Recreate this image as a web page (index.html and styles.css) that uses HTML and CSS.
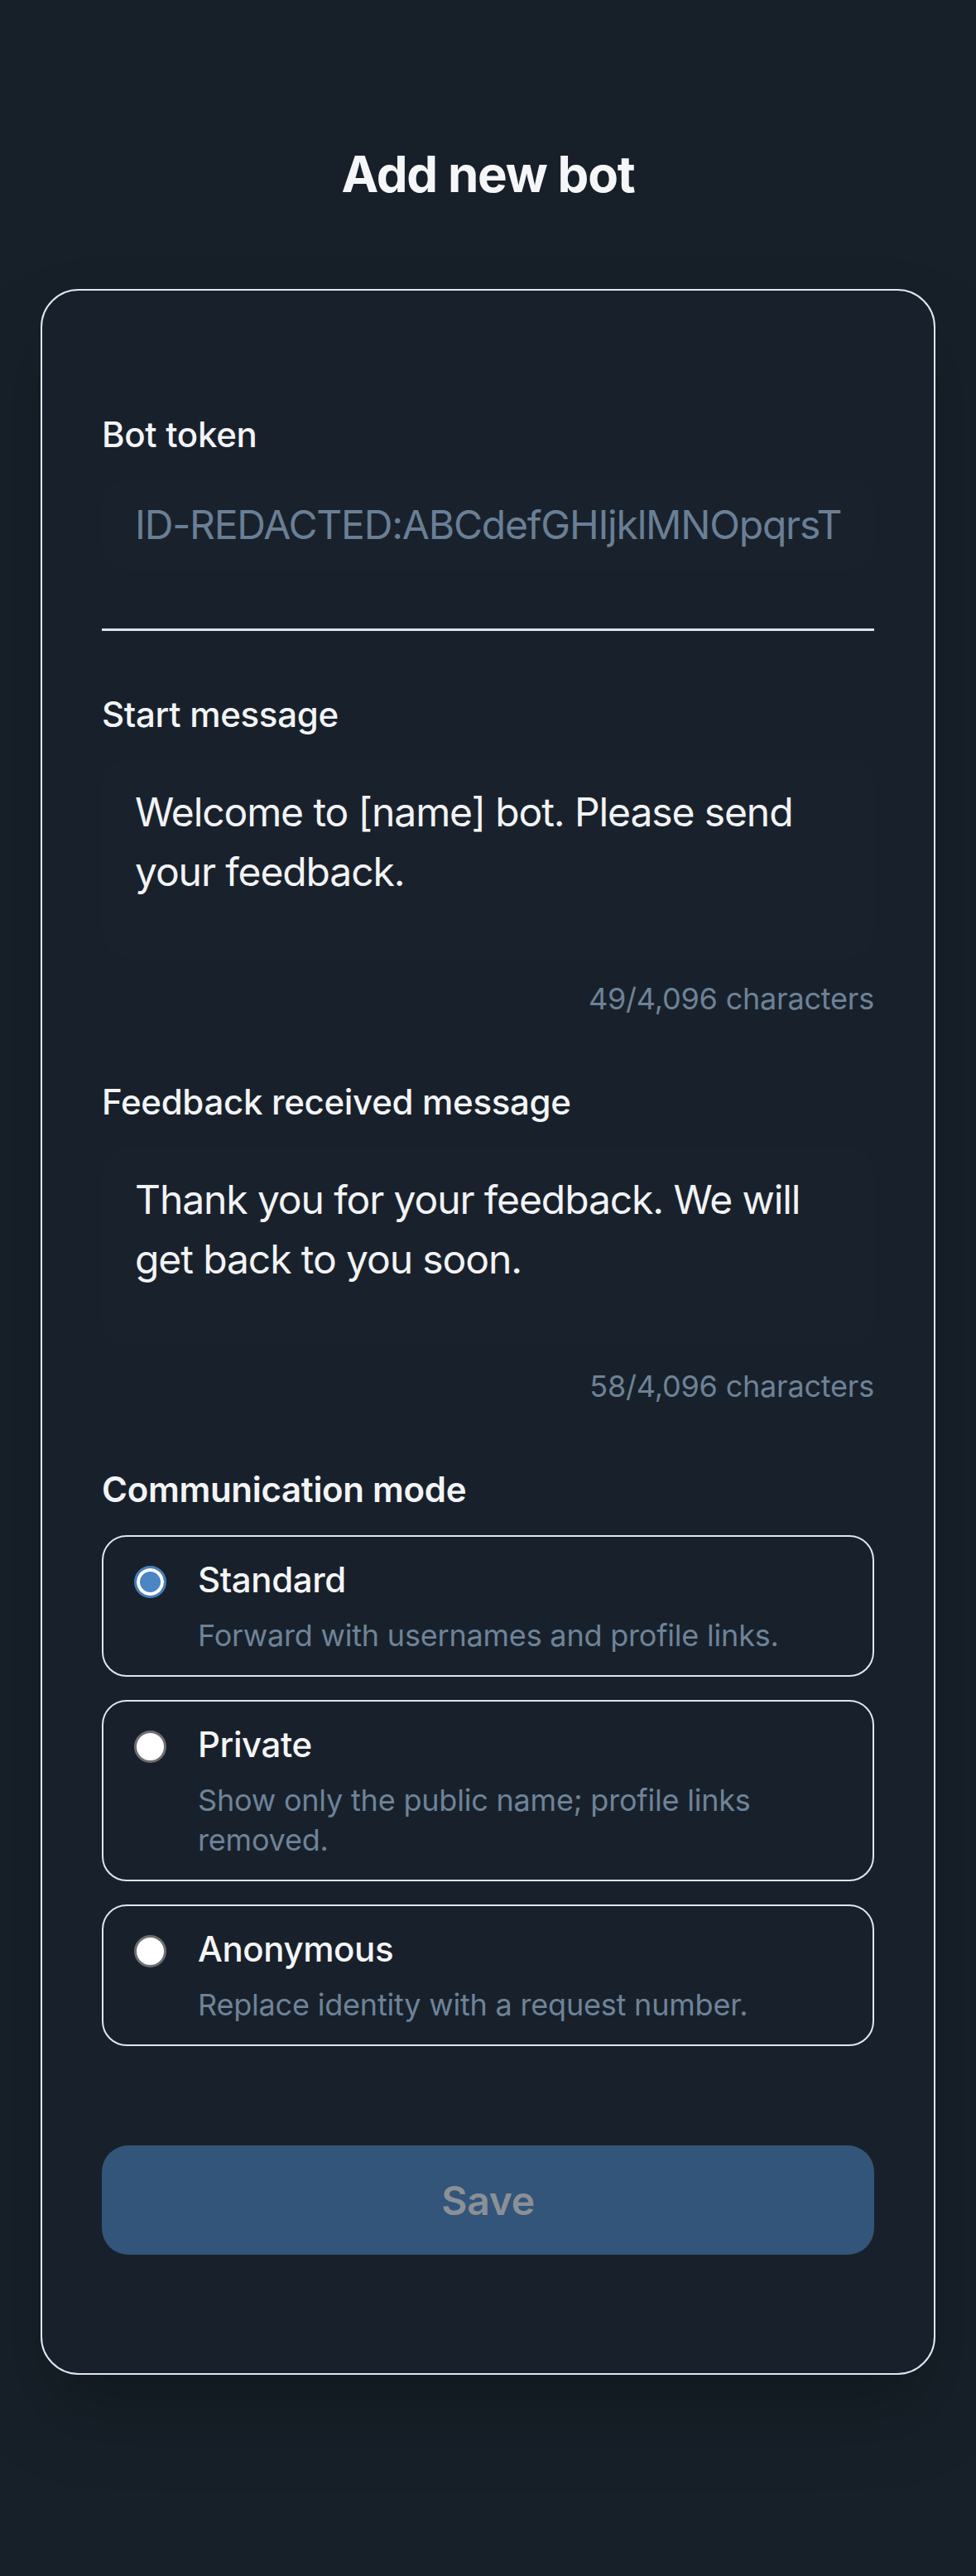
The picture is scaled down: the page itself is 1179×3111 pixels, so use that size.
FILE: index.html
```html
<!DOCTYPE html>
<html lang="en">
<head>
<meta charset="utf-8">
<title>Add new bot</title>
<link rel="stylesheet" href="styles.css">
</head>
<body>
<main class="page">
  <h1 class="title">Add new bot</h1>
  <form class="card">
    <div class="field">
      <div class="label">Bot token</div>
      <div class="input token">ID-REDACTED:ABCdefGHIjklMNOpqrsT</div>
    </div>
    <hr class="divider">
    <div class="field section">
      <div class="label">Start message</div>
      <div class="textarea">Welcome to [name] bot. Please send your feedback.</div>
      <div class="counter">49/4,096 characters</div>
    </div>
    <div class="field section">
      <div class="label">Feedback received message</div>
      <div class="textarea">Thank you for your feedback. We will get back to you soon.</div>
      <div class="counter">58/4,096 characters</div>
    </div>
    <div class="field section">
      <div class="label strong">Communication mode</div>
      <div class="modes">
        <div class="mode">
          <span class="radio checked"></span>
          <div class="mode-text">
            <div class="mode-title">Standard</div>
            <div class="mode-desc">Forward with usernames and profile links.</div>
          </div>
        </div>
        <div class="mode">
          <span class="radio"></span>
          <div class="mode-text">
            <div class="mode-title">Private</div>
            <div class="mode-desc">Show only the public name; profile links removed.</div>
          </div>
        </div>
        <div class="mode">
          <span class="radio"></span>
          <div class="mode-text">
            <div class="mode-title">Anonymous</div>
            <div class="mode-desc">Replace identity with a request number.</div>
          </div>
        </div>
      </div>
    </div>
    <button type="button" class="save">Save</button>
  </form>
</main>
</body>
</html>
```
FILE: styles.css
```css
* { box-sizing: border-box; }

html, body {
  margin: 0;
  padding: 0;
  background: #172029;
}

body {
  font-family: Inter, "Noto Sans", "Liberation Sans", sans-serif;
  color: #f2f3f5;
  min-height: 3111px;
}

.page {
  padding: 174px 49px 200px 49px;
}

.title {
  margin: 0;
  text-align: center;
  font-size: 60px;
  line-height: 72px;
  font-weight: 700;
  letter-spacing: -1.2px;
  color: #f5f6f8;
}

.card {
  margin: 103px 0 0 0;
  width: 1081px;
  background: #18212b;
  border: 2px solid #dfe6ee;
  border-radius: 46px;
  padding: 149px 72px 143px 72px;
  box-shadow: 0 50px 90px rgba(0, 0, 0, 0.22);
  display: flex;
  flex-direction: column;
}

.field {
  display: flex;
  flex-direction: column;
}

.section {
  margin-top: 76px;
}

.label {
  font-size: 42px;
  line-height: 50px;
  font-weight: 500;
  color: #f3f4f6;
  letter-spacing: -0.3px;
}

.label.strong {
  font-weight: 600;
}

.input {
  margin-top: 29px;
  height: 110px;
  line-height: 110px;
  padding: 0 40px;
  border-radius: 30px;
  background: #19222c;
  font-size: 48px;
  white-space: nowrap;
  overflow: hidden;
}

.token {
  color: #6a7f96;
  letter-spacing: -1.2px;
}

.divider {
  margin: 70px 0 0 0;
  border: 0;
  height: 3px;
  background: #dde4ec;
}

.textarea {
  margin-top: 29px;
  height: 240px;
  padding: 28px 40px;
  border-radius: 30px;
  background: #19222c;
  font-size: 48px;
  line-height: 72px;
  color: #f2f3f5;
  letter-spacing: -1.1px;
}

.counter {
  margin-top: 25px;
  text-align: right;
  font-size: 36px;
  line-height: 48px;
  color: #6e8297;
  letter-spacing: -0.2px;
}

.modes {
  margin-top: 30px;
  display: flex;
  flex-direction: column;
  gap: 28px;
}

.mode {
  display: flex;
  align-items: flex-start;
  gap: 38px;
  border: 2px solid #dfe6ee;
  border-radius: 30px;
  padding: 27px 37px 24px 37px;
}

.radio {
  flex: none;
  width: 39px;
  height: 39px;
  margin-top: 8px;
  border-radius: 50%;
  background: #ffffff;
  border: 3px solid #6f6f72;
}

.radio.checked {
  background: #4b85c5;
  border-color: #4a7db6;
  box-shadow: inset 0 0 0 4px #ffffff;
}

.mode-text {
  display: flex;
  flex-direction: column;
  gap: 18px;
}

.mode-title {
  font-size: 42px;
  line-height: 50px;
  font-weight: 500;
  color: #f4f5f7;
  letter-spacing: -0.4px;
}

.mode-desc {
  font-size: 36px;
  line-height: 48px;
  color: #6f8399;
  letter-spacing: -0.2px;
}

.save {
  margin-top: 120px;
  height: 132px;
  width: 100%;
  border: 0;
  border-radius: 32px;
  background: #33557a;
  color: #8b9097;
  font-family: Inter, "Noto Sans", "Liberation Sans", sans-serif;
  font-size: 48px;
  font-weight: 600;
  letter-spacing: -0.3px;
}
```
